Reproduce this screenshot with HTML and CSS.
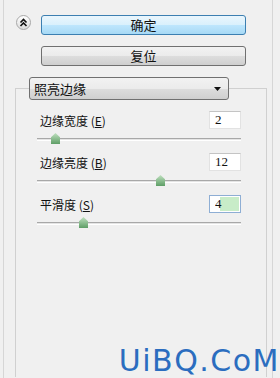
FILE: index.html
```html
<!DOCTYPE html>
<html lang="zh-CN">
<head>
    <meta charset="UTF-8">
    <meta name="viewport" content="width=device-width, initial-scale=1.0">
    <title>照亮边缘</title>
    <link rel="stylesheet" href="styles.css">
</head>
<body>
    <div class="panel">
        <div class="top">
            <button class="collapse" type="button">
                <svg width="9" height="9" viewBox="0 0 9 9">
                    <polyline points="1.5,4.5 4.5,1.5 7.5,4.5" fill="none" stroke="#111" stroke-width="1.6"/>
                    <polyline points="1.5,8 4.5,5 7.5,8" fill="none" stroke="#111" stroke-width="1.6"/>
                </svg>
            </button>
            <div class="actions">
                <button class="btn btn-ok" type="button">确定</button>
                <button class="btn" type="button">复位</button>
            </div>
        </div>

        <fieldset class="group">
            <legend class="select">
                <span>照亮边缘</span>
                <svg width="7" height="4" viewBox="0 0 7 4"><polygon points="0,0 7,0 3.5,4" fill="#111"/></svg>
            </legend>
            <div class="fields">
                <div class="field">
                    <div class="field-row">
                        <label for="edgeWidth">边缘宽度 (<u>E</u>)</label>
                        <input type="text" id="edgeWidth" value="2">
                    </div>
                    <div class="track"><span class="thumb" style="left: 14px"></span></div>
                </div>
                <div class="field">
                    <div class="field-row">
                        <label for="edgeBright">边缘亮度 (<u>B</u>)</label>
                        <input type="text" id="edgeBright" value="12">
                    </div>
                    <div class="track"><span class="thumb" style="left: 119px"></span></div>
                </div>
                <div class="field">
                    <div class="field-row">
                        <label for="smooth">平滑度 (<u>S</u>)</label>
                        <input type="text" id="smooth" class="active" value="4">
                    </div>
                    <div class="track"><span class="thumb" style="left: 42px"></span></div>
                </div>
            </div>
        </fieldset>
    </div>

    <div class="watermark">UiBQ.CoM</div>
</body>
</html>
```

FILE: styles.css
```css
body {
    position: relative;
    margin: 0;
    height: 378px;
    overflow: hidden;
    background-color: #f0f0f0;
    font-family: "Noto Sans CJK SC", "Liberation Sans", sans-serif;
    font-size: 12px;
    color: #111;
}

.panel {
    height: 378px;
    width: 270px;
    margin-left: 3px;
    border-left: 1px solid #d6d6d6;
    border-right: 1px solid #d6d6d6;
    box-sizing: border-box;
}

.top {
    display: flex;
    gap: 10px;
    padding: 15px 0 0 12px;
}

.collapse {
    width: 15px;
    height: 15px;
    padding: 0;
    border: 1px solid #a8a8a8;
    border-radius: 50%;
    background: linear-gradient(#ffffff, #dcdcdc);
    display: flex;
    align-items: center;
    justify-content: center;
}

.actions {
    display: flex;
    flex-direction: column;
    gap: 11px;
    width: 205px;
}

.btn {
    height: 20px;
    padding: 0;
    font-family: inherit;
    font-size: 13px;
    line-height: 18px;
    color: #111;
    border: 1px solid #707070;
    border-radius: 3px;
    background: linear-gradient(#f2f2f2 0%, #ebebeb 50%, #dddddd 51%, #cfcfcf 100%);
}

.btn-ok {
    border-color: #3c7fb1;
    background: linear-gradient(#eaf6fd 0%, #d9f0fc 50%, #bee6fd 51%, #a7d9f5 100%);
}

.group {
    margin: 11px 0 0 11px;
    width: 252px;
    padding: 0;
    border: 1px solid #d0d0d0;
    border-bottom: none;
    box-sizing: border-box;
    height: 300px;
}

.select {
    margin-left: 13px;
    width: 200px;
    height: 23px;
    padding: 0 7px 0 4px;
    box-sizing: border-box;
    display: flex;
    align-items: center;
    justify-content: space-between;
    font-size: 13px;
    border: 1px solid #707070;
    border-radius: 3px;
    background: linear-gradient(#f2f2f2 0%, #ebebeb 50%, #dddddd 51%, #cfcfcf 100%);
}

.fields {
    padding: 11px 25px 0 21px;
    display: flex;
    flex-direction: column;
    gap: 12px;
}

.field-row {
    display: flex;
    justify-content: space-between;
    align-items: center;
}

.field-row label {
    padding-left: 3px;
}

.field-row input {
    width: 32px;
    height: 18px;
    padding: 0 0 0 5px;
    box-sizing: border-box;
    font-family: "Liberation Serif", serif;
    font-size: 13px;
    color: #111;
    border: 1px solid #e2e2e2;
    border-top-color: #c4c4c4;
    background-color: #fff;
    outline: none;
}

.field-row input.active {
    border-color: #8eaed4;
    background: linear-gradient(#c8ecc8, #c8ecc8) no-repeat 10px 1px / 19px 14px, #fff;
}

.track {
    position: relative;
    margin-top: 9px;
    height: 1px;
    border-top: 1px solid #a8a8a8;
    border-bottom: 1px solid #ffffff;
    background-color: #e4e4e4;
}

.thumb {
    position: absolute;
    top: -6px;
    width: 9px;
    height: 11px;
    background: linear-gradient(#bfe0bf, #5e9e66);
    clip-path: polygon(50% 0, 100% 38%, 100% 100%, 0 100%, 0 38%);
}

.watermark {
    position: absolute;
    right: 0;
    bottom: 0;
    font-family: "DejaVu Sans", sans-serif;
    font-size: 30px;
    color: #2b6dbf;
    letter-spacing: 1.5px;
}
```
